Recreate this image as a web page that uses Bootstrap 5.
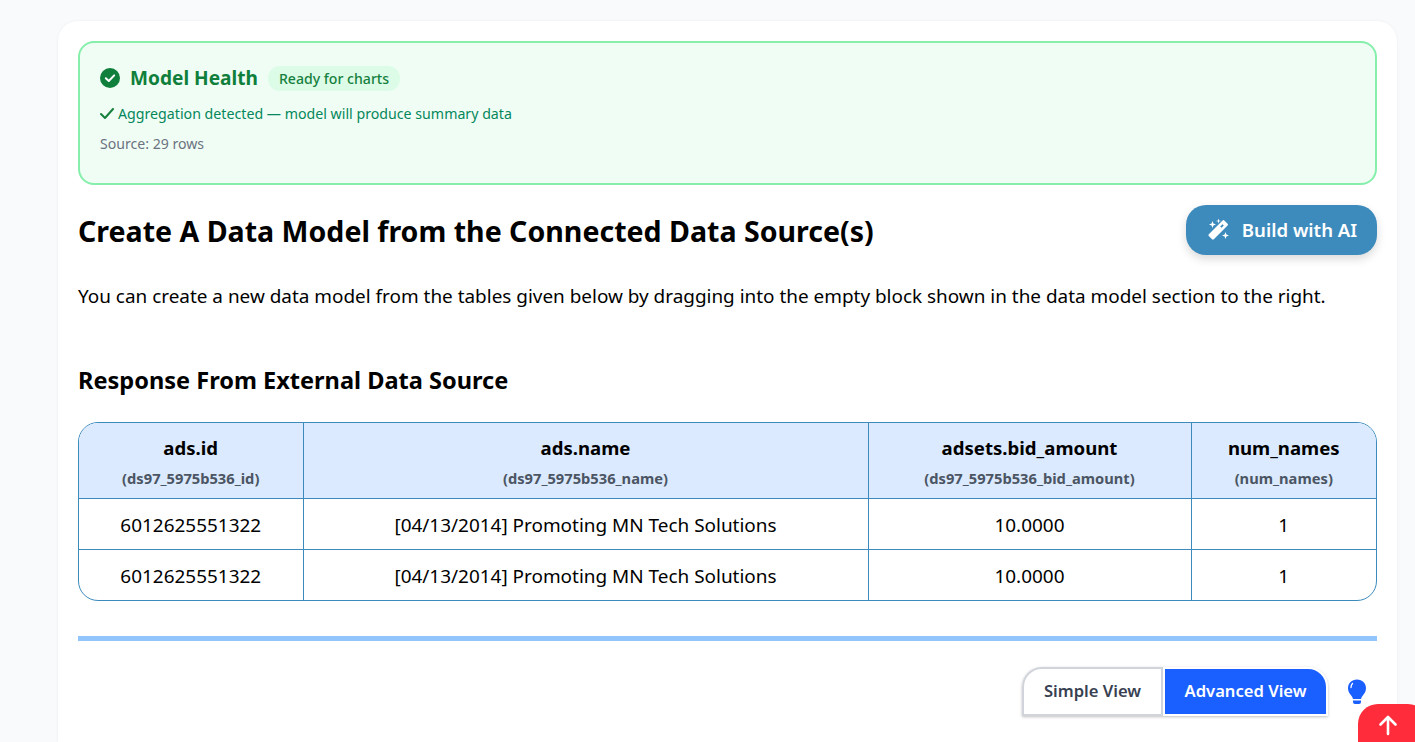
<!DOCTYPE html>
<html lang="en">
<head>
<meta charset="utf-8">
<title>Data Model</title>
<link href="https://cdn.jsdelivr.net/npm/bootstrap@5.3.0/dist/css/bootstrap.min.css" rel="stylesheet">
<style>
html,body{height:742px;overflow:hidden}
body{background:#f9fafb;font-family:"Noto Sans","Open Sans",sans-serif;color:#000;font-size:18px}
.sheet{margin:21px 18px 0 58px;background:#fff;border-radius:20px 20px 0 0;padding:20px;height:721px;box-shadow:0 0 3px rgba(0,0,0,.06)}
.health{background:#f0fdf4;border:2px solid #86efac;border-radius:16px;height:144px;padding:22px 20px 20px;color:#15803d}
.health-title{font-size:19.1px;font-weight:700;color:#0f7f3b;line-height:26px;margin:0 0 0 10px}
.ready{background:#dcfce7;border-radius:12px;font-size:14.1px;font-weight:500;padding:0 11px;line-height:25px;color:#15803d;margin-left:10px}
.health-msg{font-size:14.2px;color:#04875c;line-height:20px;margin-top:13px}
.health-src{font-size:14.1px;color:#6b7280;line-height:20px;margin-top:10px}
.main-title{font-size:28.55px;font-weight:700;line-height:40px;margin:0;padding-top:2px}
.ai-btn{background:#3d8bbd;color:#fff;border:0;border-radius:20px;height:50px;width:191px;font-size:18.6px;font-weight:600;box-shadow:0 4px 10px rgba(0,0,0,.15)}
.ai-btn:hover{background:#3d8bbd;color:#fff}
.intro{font-size:18.93px;line-height:27px;margin:28px 0 0}
.sub-title{font-size:23.55px;font-weight:700;line-height:32px;margin:54px 0 26px}
.frame{border:1px solid #3d8bbd;border-radius:20px;overflow:hidden;height:179px}
.grid-table{table-layout:fixed;width:100%;border-collapse:collapse;margin:0}
.grid-table th,.grid-table td{border:1px solid #3d8bbd;text-align:center;vertical-align:middle;padding:0}
.grid-table tr:first-child th{border-top:0}
.grid-table tr:last-child td{border-bottom:0}
.grid-table th:first-child,.grid-table td:first-child{border-left:0}
.grid-table th:last-child,.grid-table td:last-child{border-right:0}
.grid-table th{background:#dbeafe;height:75px;font-size:18.6px;font-weight:700;line-height:24px;padding-top:3px}
.grid-table td{height:51px;font-size:18.95px;font-weight:400;padding-top:4px}
.grid-table tr:last-child td{padding-top:2px}
.w-a{width:224px}.w-b{width:565px}.w-c{width:323px}
.alias{display:block;font-size:14.7px;font-weight:700;color:#4b5563;line-height:18px;margin-top:9px}
.rule{height:5px;background:#93c5fd;margin-top:35px}
.toggle{height:49px;box-shadow:0 1px 3px rgba(0,0,0,.25);border-radius:20px 20px 0 0;background:#fff}
.tog{height:49px;border:2px solid #d1d5db;background:#fff;color:#374151;font-size:16.6px;font-weight:600;padding:0;border-radius:20px 0 0 0;width:141px}
.tog.on{background:#1a5fff;color:#fff;border:2px solid #fff;border-radius:0 20px 0 0;width:165px}
.tog:hover{background:#fff;color:#374151;border-color:#d1d5db}
.tog.on:hover{background:#1a5fff;color:#fff;border-color:#fff}
.bulb{width:24px;height:28px;display:block;margin-left:17px}
.bar-end{margin-top:26px;padding-right:8px}
.to-top{position:fixed;left:1358px;top:704px;width:70px;height:60px;border:0;border-radius:20px;background:#ff2d3b;padding:10px 0 0 20px;display:flex;align-items:flex-start}
</style>
</head>
<body>
<div class="sheet">
  <div class="health">
    <div class="d-flex align-items-center">
      <svg width="20" height="20" viewBox="0 0 20 20" class="flex-shrink-0"><circle cx="10" cy="10" r="10" fill="#0f7f3b"/><path d="M5.800 10.200l3 2.800 5.400-5.600" fill="none" stroke="#fff" stroke-width="2" stroke-linecap="round" stroke-linejoin="round"/></svg>
      <h3 class="health-title">Model Health</h3>
      <span class="ready">Ready for charts</span>
    </div>
    <div class="health-msg d-flex align-items-center">
      <svg width="14" height="12" viewBox="0 0 14 12" class="me-1"><path d="M1 6l4 4L13 1" fill="none" stroke="#15803d" stroke-width="2" stroke-linecap="round" stroke-linejoin="round"/></svg>
      <span>Aggregation detected — model will produce summary data</span>
    </div>
    <div class="health-src">Source: 29 rows</div>
  </div>
  <div class="d-flex justify-content-between align-items-center mt-3 pt-1">
    <h2 class="main-title">Create A Data Model from the Connected Data Source(s)</h2>
    <button class="btn ai-btn d-flex align-items-center justify-content-center gap-2" type="button">
      <svg class="me-1" width="24" height="24" viewBox="0 0 24 24" fill="#fff"><path d="M18.300 2.400l3.300 3.300a1.200 1.200 0 0 1 0 1.700L7.800 21.200a1.200 1.200 0 0 1-1.700 0l-3.300-3.300a1.200 1.200 0 0 1 0-1.700L16.600 2.400a1.200 1.200 0 0 1 1.700 0zM16.500 6.200l-2.300 2.300 1.300 1.300 2.300-2.300z" fill-rule="evenodd"/><path d="M6.500 3l.9 2.600L10 6.500l-2.600.9L6.500 10l-.9-2.600L3 6.500l2.600-.9zM12.500 .5l.6 1.900 1.900.6-1.900.6-.6 1.900-.6-1.900L10 3l1.900-.6zM19.500 14l.9 2.600 2.600.9-2.600.9-.9 2.600-.9-2.600-2.600-.9 2.600-.9z"/></svg>
      <span>Build with AI</span>
    </button>
  </div>
  <p class="intro">You can create a new data model from the tables given below by dragging into the empty block shown in the data model section to the right.</p>
  <h3 class="sub-title">Response From External Data Source</h3>
  <div class="frame">
    <table class="grid-table">
      <colgroup><col class="w-a"><col class="w-b"><col class="w-c"><col></colgroup>
      <thead>
        <tr>
          <th>ads.id<span class="alias">(ds97_5975b536_id)</span></th>
          <th>ads.name<span class="alias">(ds97_5975b536_name)</span></th>
          <th>adsets.bid_amount<span class="alias">(ds97_5975b536_bid_amount)</span></th>
          <th>num_names<span class="alias">(num_names)</span></th>
        </tr>
      </thead>
      <tbody>
        <tr><td>6012625551322</td><td>[04/13/2014] Promoting MN Tech Solutions</td><td>10.0000</td><td>1</td></tr>
        <tr><td>6012625551322</td><td>[04/13/2014] Promoting MN Tech Solutions</td><td>10.0000</td><td>1</td></tr>
      </tbody>
    </table>
  </div>
  <div class="rule"></div>
  <div class="d-flex justify-content-end align-items-center bar-end">
    <div class="toggle d-flex">
      <button class="btn tog" type="button">Simple View</button>
      <button class="btn tog on" type="button">Advanced View</button>
    </div>
    <svg class="bulb" viewBox="0 0 24 28"><path d="M12 1.500c-5.200 0-9 3.900-9 8.700 0 3.300 1.700 5.300 3.200 7.300.9 1.200 1.600 2.300 1.800 3.500h8c.2-1.200.9-2.300 1.800-3.500 1.500-2 3.200-4 3.200-7.300 0-4.800-3.800-8.700-9-8.700z" fill="#1a5fff"/><path d="M7.500 5.500c-1 1-1.500 2.500-1.500 4" stroke="#fff" stroke-width="1.300" fill="none" stroke-linecap="round"/><path d="M8 22.500h8v1.500a2 2 0 0 1-2 2h-4a2 2 0 0 1-2-2z" fill="#1a5fff"/></svg>
  </div>
</div>
<button class="to-top" type="button" aria-label="Back to top">
  <svg width="20" height="22" viewBox="0 0 20 22"><path d="M10 20V3M2.500 10.500L10 3l7.500 7.500" fill="none" stroke="#fff" stroke-width="2.600" stroke-linecap="round" stroke-linejoin="round"/></svg>
</button>
<script src="https://cdn.jsdelivr.net/npm/bootstrap@5.3.0/dist/js/bootstrap.bundle.min.js"></script>
</body>
</html>
